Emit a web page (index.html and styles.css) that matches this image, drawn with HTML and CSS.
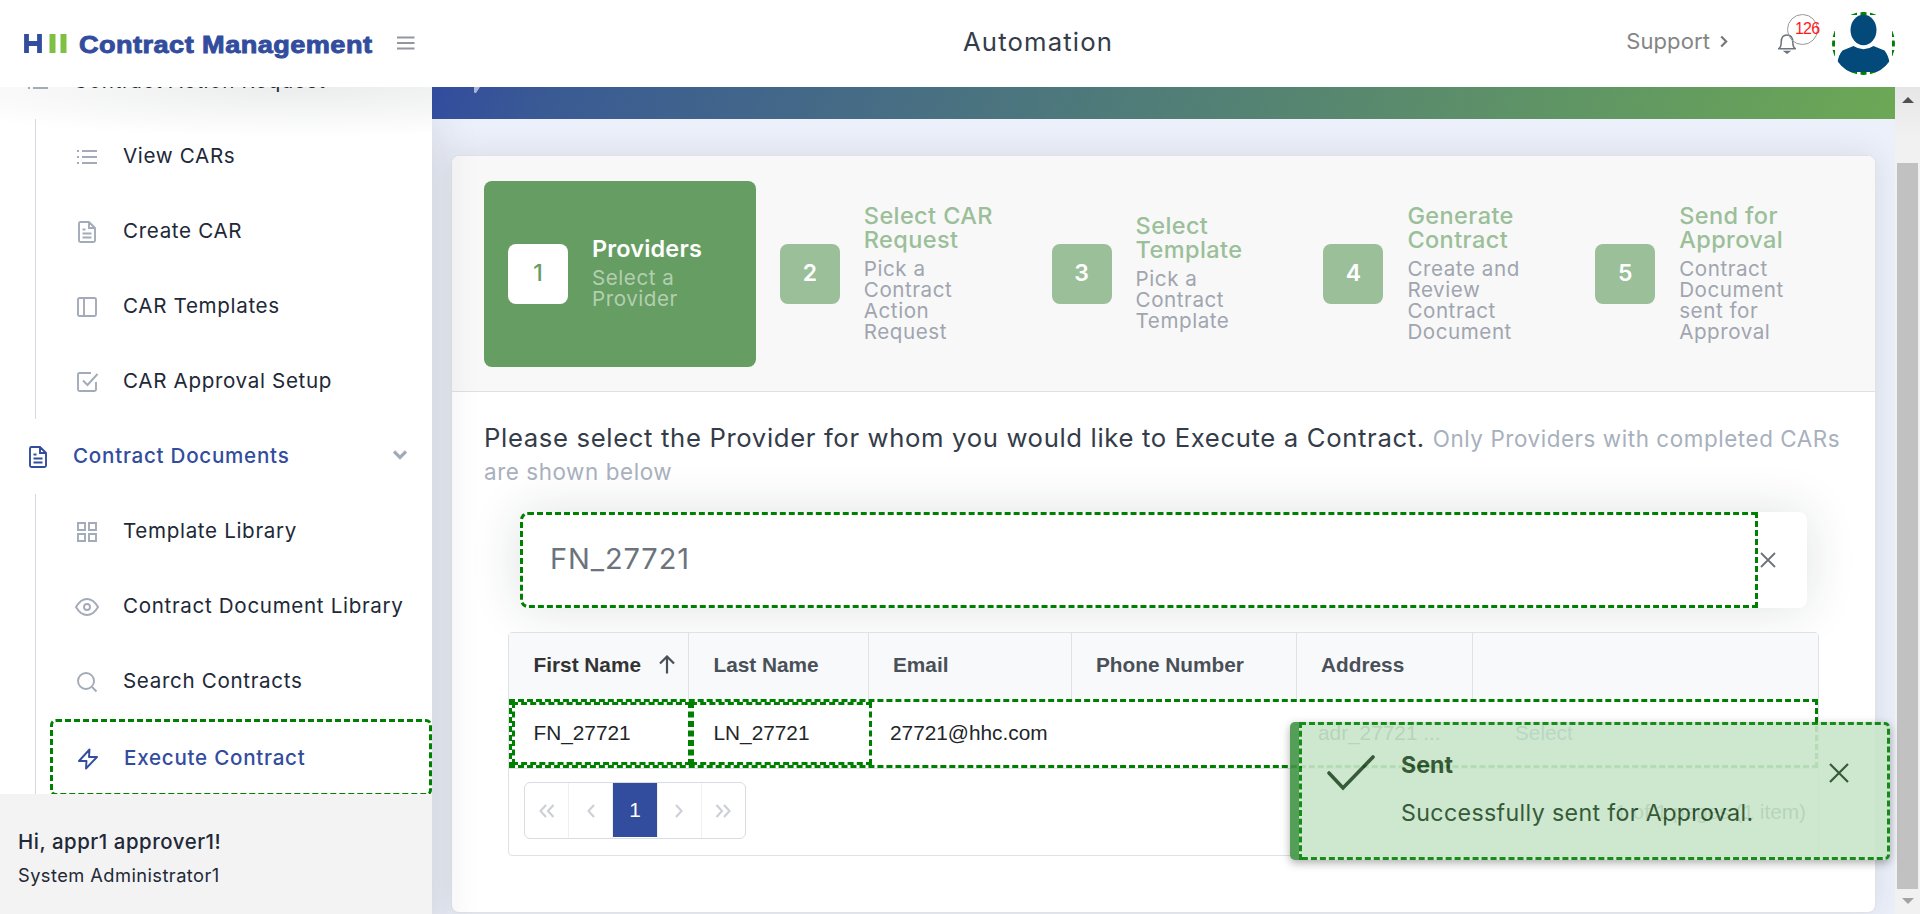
FILE: index.html
```
<!DOCTYPE html>
<html lang="en">
<head>
<meta charset="utf-8">
<title>Contract Management</title>
<link rel="stylesheet" href="styles.css">
</head>
<body>
<header class="topbar">
  <div class="brand">
    <svg class="brand-mark" width="44" height="20" viewBox="0 0 44 20"><path d="M2.500 0v19M15.500 0v19M2.500 9.500h13" stroke="#324c9e" stroke-width="4.800" fill="none"/><path d="M28.500 0v19M39.500 0v19" stroke="#7ec142" stroke-width="6"/></svg>
    <div class="brand-box"><span class="brand-name">Contract Management</span></div>
    <svg class="burger" width="18" height="14" viewBox="0 0 18 14"><path d="M0 1.500h17.500M0 7h17.500M0 12.500h17.500" stroke="#93969c" stroke-width="1.800"/></svg>
  </div>
  <div class="org">Automation</div>
  <div class="tools">
    <span class="support">Support</span>
    <svg class="support-arrow" width="8" height="13" viewBox="0 0 8 13"><path d="M1.200 1.500l5 5-5 5" fill="none" stroke="#777" stroke-width="2.200"/></svg>
    <div class="bell">
      <svg width="18" height="20" viewBox="0 0 18 20" fill="none" stroke="#6d747d" stroke-width="1.500"><path d="M.5 14.700h17c-2.300-1-2.700-3.200-2.700-6.500C14.800 3.500 12.500 1 9 1S3.200 3.500 3.200 8.200c0 3.300-.4 5.500-2.700 6.500z" stroke-linejoin="round"/><path d="M7 17.500h4l-2 1.500z" fill="#6d747d"/></svg>
      <span class="count">126</span>
    </div>
    <div class="avatar">
      <svg width="63" height="63" viewBox="0 0 63 63" fill="#034a7b"><ellipse cx="31.500" cy="18" rx="13" ry="15.300"/><path d="M21.500 34q10 6.500 20 0l11 4.500q4 5 5 12L47.500 60H15L5.500 50.500Q6.500 43 10.500 38.500z"/></svg>
    </div>
  </div>
</header>
<div class="shell">
  <aside class="sidebar">
    <nav class="nav">
      <a class="item top cut"><svg class="ic" width="20" height="18" viewBox="0 0 20 18"><path d="M0 2h2M5 2h15M0 9h2M5 9h15M0 15h2M5 15h15"/></svg>Contract Action Request</a>
      <div class="group">
        <a class="item"><svg class="ic" width="20" height="18" viewBox="0 0 20 18"><path d="M0 3h2M5 3h15M0 9h2M5 9h15M0 15h2M5 15h15"/></svg>View CARs</a>
        <a class="item"><svg class="ic" width="20" height="22" viewBox="0 0 20 22"><path d="M12 1H3.500Q2 1 2 2.500v17Q2 21 3.500 21h13q1.500 0 1.500-1.500V7zM12 1v6h6M5.500 8.500h3M5.500 12.500h9M5.500 16.500h9"/></svg>Create CAR</a>
        <a class="item"><svg class="ic" width="20" height="20" viewBox="0 0 20 20"><rect x="1" y="1" width="18" height="18" rx="1.500"/><path d="M7 1v18"/></svg>CAR Templates</a>
        <a class="item"><svg class="ic" width="20" height="20" viewBox="0 0 20 20"><path d="M14 1H2.500Q1 1 1 2.500v15Q1 19 2.500 19h15q1.500 0 1.500-1.500V10M6 8.500l4.500 4.500L20.500 2"/></svg>CAR Approval Setup</a>
      </div>
      <a class="item top on"><svg class="ic" width="20" height="22" viewBox="0 0 20 22"><path d="M12 1H3.500Q2 1 2 2.500v17Q2 21 3.500 21h13q1.500 0 1.500-1.500V7zM12 1v6h6M5.500 8.500h3M5.500 12.500h9M5.500 16.500h9"/></svg>Contract Documents<svg class="chev" width="14" height="10" viewBox="0 0 14 10"><path d="M1 1.500l6 6 6-6" fill="none" stroke="#a3abb8" stroke-width="3.200"/></svg></a>
      <div class="group">
        <a class="item"><svg class="ic" width="20" height="20" viewBox="0 0 20 20"><path d="M1 1h7v7H1zM12 1h7v7h-7zM1 12h7v7H1zM12 12h7v7h-7z"/></svg>Template Library</a>
        <a class="item"><svg class="ic wide" width="24" height="18" viewBox="0 0 24 18"><path d="M1 9q2-3.500 5-6 6-4 12 0 3 2.500 5 6-2 3.500-5 6-6 4-12 0-3-2.500-5-6z"/><circle cx="12" cy="9" r="3"/></svg>Contract Document Library</a>
        <a class="item"><svg class="ic" width="20" height="20" viewBox="0 0 20 20"><circle cx="9" cy="9" r="8"/><path d="M15 15l4.500 4.500"/></svg>Search Contracts</a>
        <a class="item on marked"><svg class="ic" width="20" height="22" viewBox="0 0 20 22"><path d="M11.500 1.500L1 13h7.500L8 20.500 19 9h-8z" stroke-linejoin="round"/></svg>Execute Contract</a>
      </div>
    </nav>
    <footer class="who"><div class="hi">Hi, appr1 approver1!</div><div class="role">System Administrator1</div></footer>
  </aside>
  <main class="main">
    <div class="banner"><svg width="12" height="10" viewBox="0 0 12 10"><path d="M2 0h6L4 6q-2 .5-2-1.500z" fill="#a9b6d8"/></svg></div>
    <section class="card">
      <div class="steps">
        <div class="step active"><b class="num">1</b><div><div class="st">Providers</div><div class="sd">Select a<br>Provider</div></div></div>
        <div class="step"><b class="num">2</b><div><div class="st">Select CAR<br>Request</div><div class="sd">Pick a<br>Contract<br>Action<br>Request</div></div></div>
        <div class="step"><b class="num">3</b><div><div class="st">Select<br>Template</div><div class="sd">Pick a<br>Contract<br>Template</div></div></div>
        <div class="step"><b class="num">4</b><div><div class="st">Generate<br>Contract</div><div class="sd">Create and<br>Review<br>Contract<br>Document</div></div></div>
        <div class="step"><b class="num">5</b><div><div class="st">Send for<br>Approval</div><div class="sd">Contract<br>Document<br>sent for<br>Approval</div></div></div>
      </div>
      <div class="body">
        <h2 class="lead">Please select the Provider for whom you would like to Execute a Contract. <small>Only Providers with completed CARs<br>are shown below</small></h2>
        <div class="search">
          <div class="field">FN_27721</div>
          <svg width="16" height="16" viewBox="0 0 16 16"><path d="M1 1l14 14M15 1L1 15" stroke="#6c737c" stroke-width="1.800"/></svg>
        </div>
        <div class="grid">
          <div class="row head">
            <div class="c sorted">First Name<svg width="16" height="19" viewBox="0 0 16 19"><path d="M8 18.500V1.500M1 8.500l7-7 7 7" fill="none" stroke="#495057" stroke-width="2.200"/></svg></div>
            <div class="c">Last Name</div><div class="c">Email</div><div class="c">Phone Number</div><div class="c">Address</div><div class="c"></div>
          </div>
          <div class="row data">
            <div class="c box">FN_27721</div><div class="c box">LN_27721</div><div class="c">27721@hhc.com</div><div class="c"></div><div class="c">adr_27721 ...</div><div class="c link">Select</div>
          </div>
          <div class="foot">
            <div class="pager">
              <span><svg width="16" height="14" viewBox="0 0 16 14"><path d="M7 1L1.500 7 7 13M14.500 1L9 7l5.500 6"/></svg></span>
              <span><svg width="10" height="14" viewBox="0 0 10 14"><path d="M8 1L2.500 7 8 13"/></svg></span>
              <span class="cur">1</span>
              <span><svg width="10" height="14" viewBox="0 0 10 14"><path d="M2 1l5.500 6L2 13"/></svg></span>
              <span><svg width="16" height="14" viewBox="0 0 16 14"><path d="M1.500 1L7 7l-5.500 6M9 1l5.500 6L9 13"/></svg></span>
            </div>
            <div class="total">1 of 1 pages (1 item)</div>
          </div>
        </div>
      </div>
    </section>
  </main>
  <div class="scroll"><i class="up"></i><div class="thumb"></div><i class="down"></i></div>
</div>
<div class="toast">
  <div class="toast-in">
    <svg class="tick" width="50" height="36" viewBox="0 0 50 36"><path d="M3 18l14 15L47 2" fill="none" stroke="#224a23" stroke-width="3.600" stroke-linecap="round"/></svg>
    <div class="msg"><div class="tt">Sent</div><div class="td">Successfully sent for Approval.</div></div>
    <svg class="tx" width="20" height="20" viewBox="0 0 20 20"><path d="M1 1l18 18M19 1L1 19" stroke="#224a23" stroke-width="2.200"/></svg>
  </div>
</div>
</body>
</html>
```
FILE: styles.css
```
* { box-sizing: border-box; }
body { margin: 0; width: 1920px; height: 914px; overflow: hidden; font-family: "Inter", "Liberation Sans", sans-serif; color: #212837; background: #fff; display: flex; flex-direction: column; }
svg { flex: none; display: block; }

.topbar { position: relative; z-index: 5; height: 87px; flex: none; display: flex; align-items: center; background: #fff; }
.brand { width: 963px; display: flex; align-items: center; padding-left: 24px; }
.brand-mark { margin-right: 11px; }
.brand-box { width: 318px; padding-top: 2px; }
.brand-name { display: inline-block; transform: scaleX(1.13); transform-origin: 0 50%; font: bold 24px/30px "Liberation Sans", sans-serif; letter-spacing: .4px; color: #324c9e; -webkit-text-stroke: .9px #324c9e; white-space: nowrap; }
.burger { margin-bottom: 2px; }
.org { font-size: 25.700px; letter-spacing: 1.150px; color: #343c49; padding-bottom: 4px; flex: 1; }
.tools { display: flex; align-items: center; padding-right: 25px; }
.support { font-size: 22px; letter-spacing: .1px; color: #858585; padding-bottom: 5px; }
.support-arrow { margin: 0 50px 4px 10px; }
.bell { position: relative; width: 54px; }
.count { position: absolute; left: 9px; top: -20px; width: 31px; height: 31px; border: 1px solid #999; border-radius: 50%; font: 16px/28px "Liberation Sans", sans-serif; letter-spacing: -.8px; color: #ff1a1a; padding-left: 7px; }
.avatar { width: 63px; height: 63px; border: 3px dashed green; clip-path: circle(31.500px); }
.avatar svg { margin: -3px; }

.shell { flex: 1; display: flex; min-height: 0; }
.sidebar { position: relative; z-index: 2; width: 432px; flex: none; display: flex; flex-direction: column; background: #fff; box-shadow: 0 32px 45px rgba(30, 40, 40, .16); clip-path: inset(0 -60px 0 0); }
.nav { flex: 1; min-height: 0; overflow: hidden; background: radial-gradient(ellipse 430px 50px at 300px 0, rgba(30, 45, 40, .09), rgba(30, 45, 40, 0)) no-repeat; }
.item { display: flex; align-items: center; height: 75px; padding: 0 0 3px 40px; font-size: 20.600px; letter-spacing: .66px; white-space: nowrap; }
.group { margin-left: 35px; border-left: 1px solid #d5d9e4; }
.ic { margin: 4px 26px 0 1px; fill: none; stroke: #a3abb8; stroke-width: 1.900; overflow: visible; }
.ic.wide { margin: 4px 24px 0 -1px; }
.top { padding-left: 27px; }
.top .ic { margin-right: 25px; margin-left: 1px; }
.cut { margin-top: -43px; }
.on { color: #324c9e; font-weight: 500; letter-spacing: .74px; }
.on .ic { stroke: #324c9e; }
.chev { margin: 0 25px 0 auto; }
.marked { margin-left: 14px; height: 77px; padding: 0 0 1px 24px; border: 3px dashed green; border-radius: 6px; }
.who { height: 120px; background: #f3f3f3; padding: 35px 18px; }
.hi { font-size: 20.400px; line-height: 26px; font-weight: 500; letter-spacing: .55px; }
.role { font-size: 18.300px; line-height: 24px; letter-spacing: .43px; margin-top: 8px; }

.main { flex: 1; background: #ecf0fa; display: flex; flex-direction: column; }
.banner { position: relative; z-index: 3; height: 32px; padding-left: 40px; background: linear-gradient(112deg, #324c9e 0%, #3a5a94 8%, #6ca855 100%); }
.card { margin: 36px 19px 0; height: 758px; border: 1px solid #e0e2e6; border-radius: 8px; background: #fff; box-shadow: 0 0 32px rgba(40, 50, 50, .11); overflow: hidden; }
.steps { height: 236px; background: #f8f8f8; border-bottom: 1px solid #dee2e6; padding: 25px 32px; display: flex; }
.step { width: 271.800px; height: 186px; display: flex; align-items: center; gap: 24px; padding-left: 24px; border-radius: 8px; }
.num { width: 60px; height: 60px; border-radius: 8px; background: #9abf99; color: #fff; font-size: 23px; font-weight: 600; display: flex; align-items: center; justify-content: center; padding-bottom: 2px; }
.st { font-size: 23.500px; line-height: 24px; font-weight: 500; letter-spacing: .4px; color: #9abf99; padding-bottom: 6px; margin-top: -3px; }
.sd { font-size: 20.600px; line-height: 21px; letter-spacing: .55px; color: #a0a5b0; }
.active { background: #669d62; }
.active .num { background: #fff; color: #669d62; font-weight: 500; }
.active .st { color: #fff; font-weight: 600; letter-spacing: .15px; }
.active .sd { color: #b3cfb1; }

.body { padding: 30px 32px 0; }
.lead { margin: 0; height: 90px; font-size: 25.700px; line-height: 31.500px; font-weight: 400; letter-spacing: .64px; color: #343c49; white-space: nowrap; }
.lead small { font-size: 22.400px; letter-spacing: .58px; color: #a8b0bd; }
.search { margin: 0 36px; height: 96px; background: #fff; border-radius: 8px; display: flex; align-items: center; box-shadow: 0 0 50px rgba(30, 45, 40, .14); }
.search svg { margin-left: 2px; }
.field { width: 1238px; height: 96px; border: 3px dashed green; border-radius: 8px 0 0 8px; padding-left: 27px; font-size: 29px; line-height: 88px; letter-spacing: .9px; color: #6c737c; }
.grid { margin: 24px 24px 0; height: 224px; border: 1px solid #dee2e6; border-radius: 4px; background: #fff; font: 20.800px/24px "Liberation Sans", sans-serif; }
.row { display: grid; grid-template-columns: 180px 179.500px 203px 225px 176.500px 1fr; }
.head { height: 66px; background: #f8f9fb; color: #495057; font-weight: bold; }
.head .c { border-right: 1px solid #dee2e6; padding: 0 0 2px 24.500px; display: flex; align-items: center; white-space: nowrap; }
.head .c:last-child { border-right: 0; }
.head .sorted { color: #333; }
.sorted svg { margin: 0 0 2px 18px; }
.data { height: 69px; outline: 3px dashed green; outline-offset: -3px; color: #212529; }
.data .c { padding: 0 0 1px 21.500px; display: flex; align-items: center; }
.data .box { margin: 3px 0; border: 3px dashed green; }
.data .box:first-child { margin-left: 3px; margin-right: -2px; padding-left: 18.500px; }
.data .box + .box { margin-left: 2px; margin-right: -3px; padding-left: 19.500px; }
.data .link { color: #324c9e; padding-left: 42px; }
.foot { border-top: 1px solid #dee2e6; display: flex; justify-content: space-between; padding: 13px 12px 0 15px; }
.pager { display: flex; height: 57px; width: 222px; border: 1px solid #d9dce0; border-radius: 6px; }
.pager span { flex: 1; display: flex; align-items: center; justify-content: center; border-right: 1px solid #f0f0f2; }
.pager span:last-child { border-right: 0; }
.pager svg { fill: none; stroke: #cdd0d6; stroke-width: 2.200; }
.pager .cur { background: #324c9e; color: #fff; margin-bottom: 1px; }
.total { line-height: 60px; }

.scroll { width: 25px; flex: none; background: linear-gradient(#e6e6e6, #f1f1f1 50px); display: flex; flex-direction: column; align-items: center; }
.up { margin: 10px 0 60px; border: 6px solid transparent; border-top: 0; border-bottom-color: #505050; }
.thumb { width: 21px; height: 726px; background: #c1c1c1; }
.down { margin-top: 9px; border: 6px solid transparent; border-bottom: 0; border-top-color: #a3a3a3; }

.toast { position: absolute; z-index: 9; left: 1290px; top: 722px; width: 600px; height: 138px; opacity: .9; background: #c8e6c9; border-left: 9px solid #439446; border-radius: 5px; box-shadow: 0 3px 9px rgba(0, 0, 0, .35); }
.toast-in { height: 138px; border: 3px dashed green; border-radius: 0 5px 5px 0; display: flex; align-items: flex-start; padding-left: 24px; }
.tick { margin: 30px 25px 0 0; }
.msg { width: 428px; padding-top: 25px; color: #224a23; font-size: 23.200px; line-height: 30px; white-space: nowrap; }
.tt { font-weight: 700; }
.td { letter-spacing: .36px; margin-top: 18px; }
.tx { margin-top: 38px; }
```
